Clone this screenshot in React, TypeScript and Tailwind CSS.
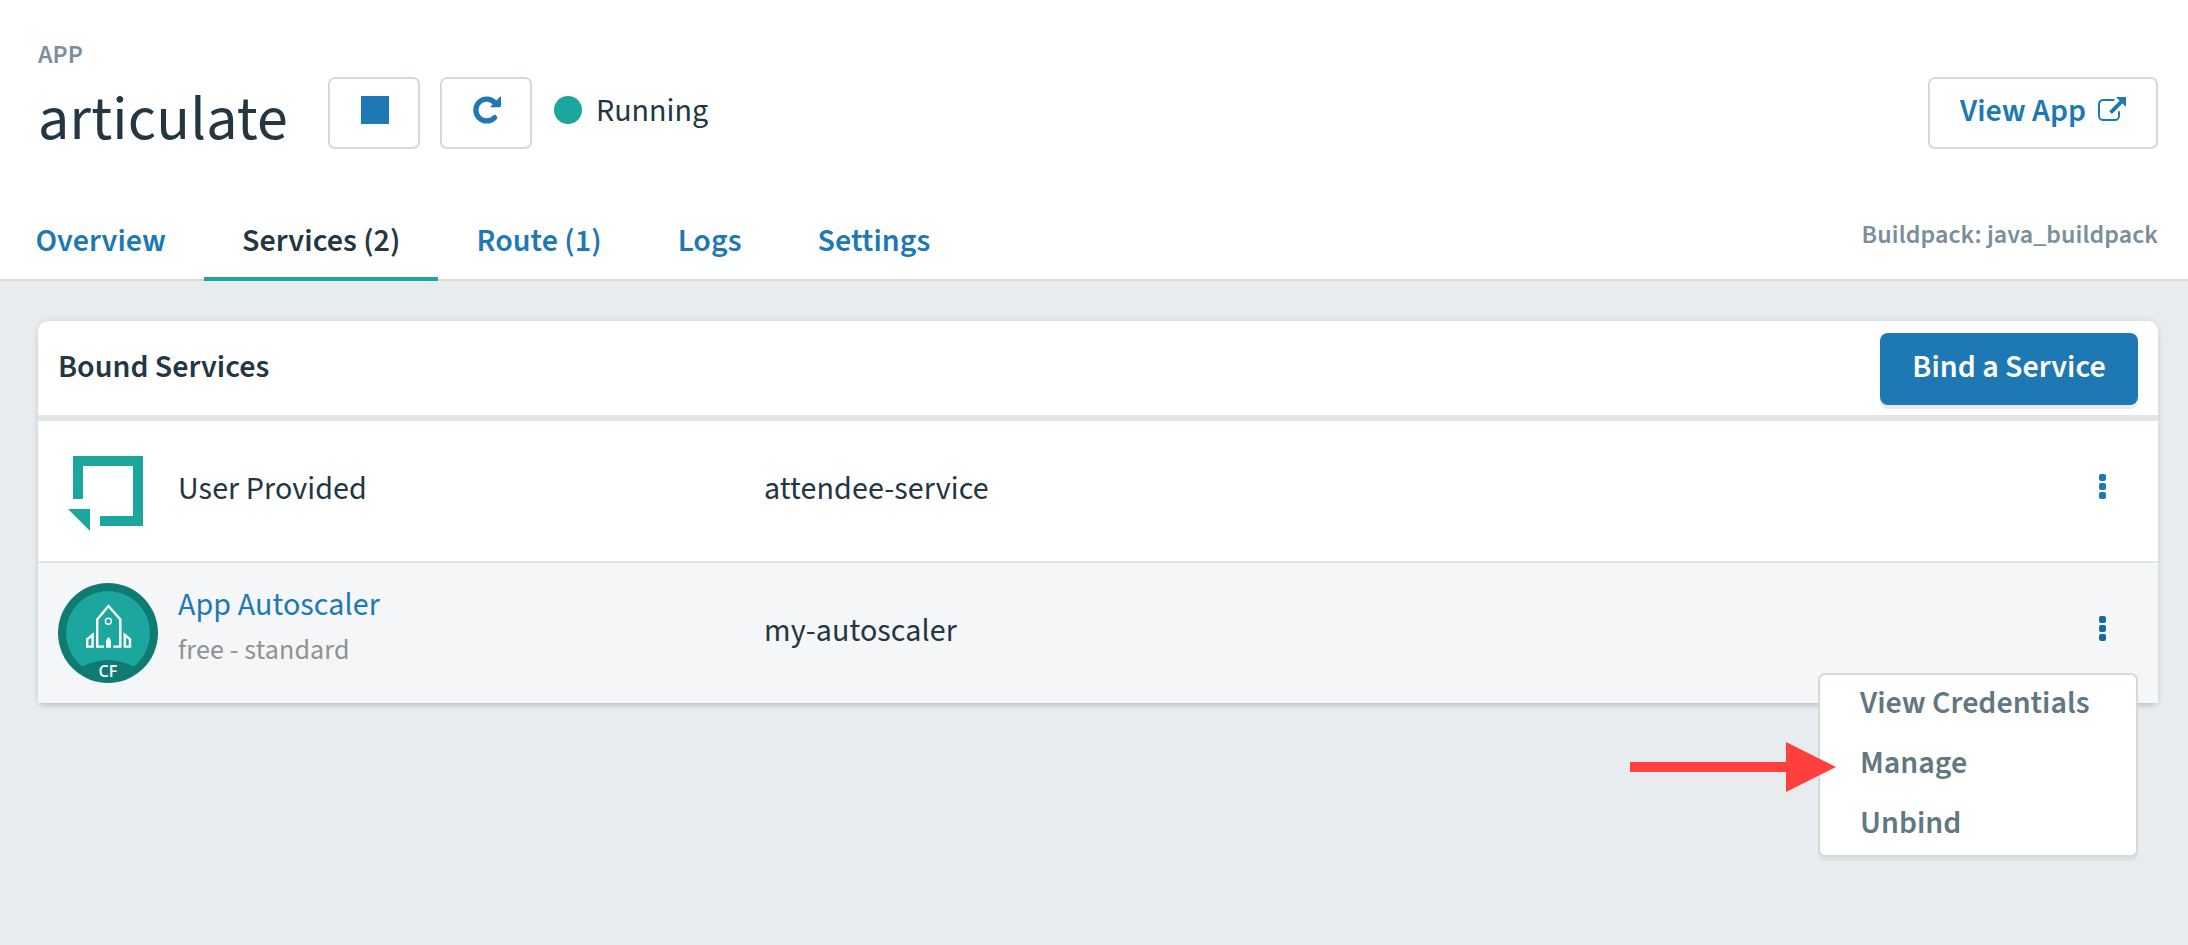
import type { ReactNode } from 'react';

const tabs = [
  { label: 'Overview' },
  { label: 'Services (2)', active: true },
  { label: 'Route (1)' },
  { label: 'Logs' },
  { label: 'Settings' },
];

const menuItems = ['View Credentials', 'Manage', 'Unbind'];

function RestartIcon() {
  return (
    <svg className="ml-[2px] h-7 w-7" viewBox="0 0 28 28" fill="none">
      <path
        d="M22.2 7.2A10.9 10.9 0 1 0 21.6 21.6"
        stroke="#1d78b3"
        strokeWidth="5.2"
        strokeLinecap="round"
      />
      <path d="M27.2 .6q.8-.4.8.6v8.6q0 1.4-1.4 1.4h-8.6q-1 0-.4-.8z" fill="#1d78b3" />
    </svg>
  );
}

function ExternalIcon() {
  return (
    <svg className="h-6 w-7" viewBox="0 0 28 24" fill="none">
      <path
        d="M16.5 3H5.2A4.2 4.2 0 0 0 1 7.2v11.6A4.2 4.2 0 0 0 5.2 23h11.6a4.2 4.2 0 0 0 4.2-4.2v-4.5"
        stroke="#1d78b3"
        strokeWidth="2"
      />
      <path d="M12.6 15.6 23.5 4.6" stroke="#1d78b3" strokeWidth="3.8" />
      <path d="M18 0h10v10z" fill="#1d78b3" />
    </svg>
  );
}

function UserProvidedIcon() {
  return (
    <svg className="h-[76px] w-[75px]" viewBox="0 0 75 76" fill="#1ba79d">
      <path d="M5 0h70v70H32V60h33V10H15v33H5z" />
      <path d="M0 53h22v22z" />
    </svg>
  );
}

function AutoscalerIcon() {
  return (
    <svg className="h-[100px] w-[100px]" viewBox="0 0 100 100">
      <circle cx="50" cy="50" r="50" fill="#107b72" />
      <path d="M24.5 83.5A42 42 0 1 1 75.5 83.5Q50 70.5 24.5 83.5z" fill="#1ba79d" />
      <g fill="none" stroke="#fff" strokeWidth="2.4">
        <path d="M46 63.6h-6.8V36.5L50.5 23l11.8 13.5v27.1h-7" />
        <circle cx="50.4" cy="38.3" r="3" strokeWidth="1.4" />
        <path d="M34.6 51.9v11.7h-5.4v-7.2zM66.8 51.9v11.7h5.2v-7.2z" />
      </g>
      <path d="M48 64.8v-6q0-2.8 2.5-4.8 2.5 2 2.5 4.8v6z" fill="#fff" />
      <text x="50" y="93.8" textAnchor="middle" fill="#fff" className="font-['Open_Sans',sans-serif] text-[16px] font-semibold">
        CF
      </text>
    </svg>
  );
}

function IconButton({ children }: { children: ReactNode }) {
  return (
    <button className="flex h-[72px] w-[92px] justify-center rounded-[7px] border-2 border-[#d4d9d9] pt-[17px]">
      {children}
    </button>
  );
}

function KebabButton({ className }: { className: string }) {
  return (
    <button className={`flex flex-col gap-[2px] ${className}`}>
      <span className="h-[7px] w-[7px] rounded-[2px] bg-current" />
      <span className="h-[7px] w-[7px] rounded-[2px] bg-current" />
      <span className="h-[7px] w-[7px] rounded-[2px] bg-current" />
    </button>
  );
}

function ActionMenu() {
  return (
    <div className="absolute top-[110px] right-5 h-[184px] w-[320px] rounded-[7px] border-2 border-[#d4d9d9] bg-white tracking-normal shadow-[0_4px_0_#dde2e3]">
      <ul className="-mt-[2px] pl-10 font-semibold text-[#617781]">
        {menuItems.map((item) => (
          <li key={item} className="leading-[60px]">
            {item}
          </li>
        ))}
      </ul>
      <svg className="absolute top-[67px] -left-[190px] h-[50px] w-[206px]" viewBox="0 0 206 50">
        <path d="M0 20h156V0l50 25-50 25V30H0z" fill="#ff3f3b" />
      </svg>
    </div>
  );
}

export default function App() {
  return (
    <div className="h-[945px] bg-[#e8ecef] font-['Source_Sans_3','Noto_Sans_CJK_JP',sans-serif] text-[32px] text-[#243641]">
      <header className="h-[281px] border-b-2 border-[#d6dbde] bg-white pt-10 pr-[30px] pl-[38px]">
        <p className="text-[26px] leading-[30px] font-semibold text-[#798f9b]">APP</p>
        <div className="mt-[7px] flex h-[72px]">
          <h1 className="w-[290px] text-[62px] leading-[87px] tracking-[0.2px]">articulate</h1>
          <IconButton>
            <span className="ml-[2px] h-7 w-7 bg-[#1d78b3]" />
          </IconButton>
          <div className="w-5" />
          <IconButton>
            <RestartIcon />
          </IconButton>
          <span className="mt-[19px] ml-[22px] h-7 w-7 rounded-full bg-[#1ba79d]" />
          <span className="ml-[14px] leading-[68px]">Running</span>
          <button className="ml-auto flex h-[72px] w-[230px] rounded-[7px] border-2 border-[#d4d9d9] pl-[30px] font-semibold text-[#1d78b3]">
            <span className="w-[138px] text-left leading-[64px]">View App</span>
            <span className="mt-[18px]">
              <ExternalIcon />
            </span>
          </button>
        </div>
        <div className="mt-[51px] flex h-[81px] justify-between">
          <nav className="-ml-[40.5px] flex font-semibold tracking-[0.04px] text-[#1d78b3]">
            {tabs.map((tab) => (
              <a
                key={tab.label}
                className={
                  tab.active
                    ? 'h-[81px] border-b-4 border-[#1ba79d] px-[38px] leading-[83px] text-[#243641]'
                    : 'h-[81px] px-[38px] leading-[83px]'
                }
              >
                {tab.label}
              </a>
            ))}
          </nav>
          <p className="text-[26px] leading-[69px] font-semibold tracking-[0.08px] text-[#798f9b]">
            Buildpack: java_buildpack
          </p>
        </div>
      </header>
      <main className="pt-10 pr-[30px] pl-[38px]">
        <section className="rounded-t-[10px] bg-white tracking-[0.1px] shadow-[0_0_6px_rgba(36,54,65,0.12),0_5px_6px_-3px_rgba(36,54,65,0.2)]">
          <div className="flex h-[100px] justify-between border-b-[6px] border-[#e0e5e8] px-5 font-semibold tracking-normal">
            <h2 className="leading-[93px]">Bound Services</h2>
            <button className="mt-3 h-[72px] w-[258px] rounded-[8px] bg-[#1d78b3] pb-1 text-center leading-[68px] text-white shadow-[0_4px_0_#e9ebec]">
              Bind a Service
            </button>
          </div>
          <div className="flex h-[142px] border-b-2 border-[#e0e5e8]">
            <div className="w-[140px] pt-[35px] pl-[30px]">
              <UserProvidedIcon />
            </div>
            <span className="w-[586px] leading-[137px]">User Provided</span>
            <span className="leading-[137px]">attendee-service</span>
            <KebabButton className="mt-[53px] mr-[52px] ml-auto text-[#1d78b3]" />
          </div>
          <div className="relative flex h-[140px] bg-[#f4f6f8]">
            <div className="w-[140px] pt-5 pl-5">
              <AutoscalerIcon />
            </div>
            <div className="w-[586px] pt-5">
              <p className="leading-[44px] text-[#1d78b3]">App Autoscaler</p>
              <p className="text-[28px] leading-[46px] tracking-[0.15px] text-[#929292]">free - standard</p>
            </div>
            <span className="leading-[136px]">my-autoscaler</span>
            <KebabButton className="mt-[53px] mr-[52px] ml-auto text-[#1669a3]" />
            <ActionMenu />
          </div>
        </section>
      </main>
    </div>
  );
}
